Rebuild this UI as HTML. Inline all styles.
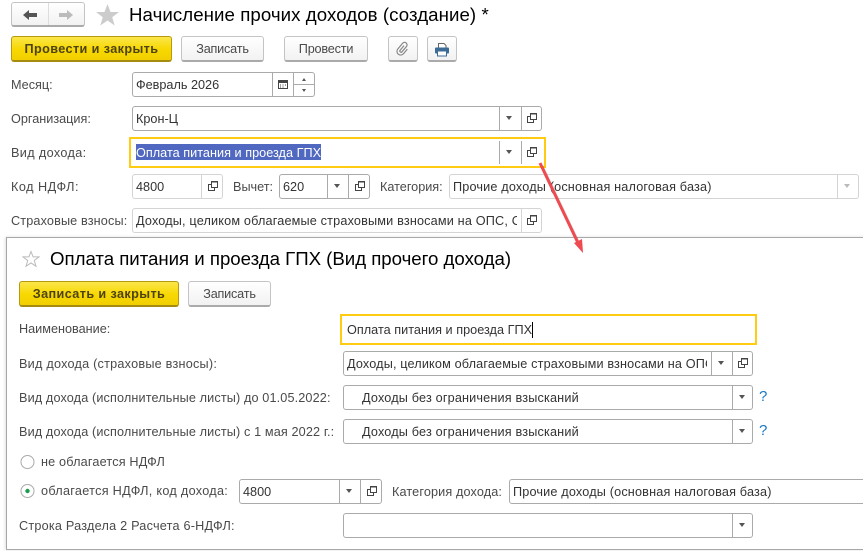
<!DOCTYPE html>
<html><head><meta charset="utf-8">
<style>
html,body{margin:0;padding:0;background:#fff}
body{width:863px;height:551px;position:relative;overflow:hidden;font-family:"Liberation Sans",Arial,sans-serif;font-size:12.67px;color:#333}
.a{position:absolute;white-space:nowrap}
.l{position:absolute;white-space:nowrap;color:#4a4a4a;font-size:12.67px;line-height:16px;letter-spacing:.13px}
.t{position:absolute;white-space:nowrap;color:#000;font-size:18.67px;line-height:22px}
.b{position:absolute;box-sizing:border-box;height:26px;border:1px solid #c4c4c4;border-bottom:2px solid #aaa;border-radius:3px;background:linear-gradient(#fff,#f2f2f2);text-align:center;line-height:24px;color:#4a4a4a;font-size:12.67px;letter-spacing:-.2px}
.y{border:1px solid #b59a10;border-bottom:2px solid #a58c10;background:linear-gradient(#fbe64a,#f7d800 55%,#f2cf00);color:#4e4310;font-weight:bold;letter-spacing:.39px}
.f{position:absolute;box-sizing:border-box;height:25px;border:1px solid #aaa;border-radius:3px;background:#fff;overflow:hidden;line-height:25px;padding-left:3px;color:#333;font-size:12.67px;letter-spacing:.17px;white-space:nowrap}
.n{letter-spacing:0}
.lt{border-color:#d4d4d4}
.s{position:absolute;top:0;bottom:0;width:1px;background:#aaa}
.lt .s{background:#d4d4d4}
.d{position:absolute;top:9px;width:0;height:0;border:3px solid transparent;border-top:4px solid #555;border-bottom:0}
.o{position:absolute;top:6px;width:10px;height:10px}
.focus{position:absolute;box-sizing:border-box;border:2px solid #fc1;background:#fff}
.q{position:absolute;color:#1a78c4;font-size:15px;line-height:16px}
</style></head><body>

<svg width="0" height="0" style="position:absolute"><defs>
<symbol id="op" viewBox="0 0 10 10"><path d="M3 3.500H.5v6h6V7" fill="none" stroke="#444"/><rect x="3.500" y=".5" width="6" height="6" fill="none" stroke="#444"/><path d="M3.500 1h6" stroke="#444"/></symbol>
</defs></svg>

<!-- nav -->
<div class="b" style="left:11px;top:2px;width:74px;height:25px"></div>
<div class="a" style="left:48px;top:3px;width:1px;height:22px;background:#ddd"></div>
<svg class="a" style="left:22px;top:8px" width="16" height="14"><path d="M1 7l6-5v3h8v4H7v3z" fill="#555"/></svg>
<svg class="a" style="left:58px;top:8px" width="16" height="14"><path d="M15 7L9 2v3H1v4h8v3z" fill="#bbb"/></svg>
<svg class="a" style="left:95px;top:3px" width="25" height="23"><path d="M12.500 1l3 8h8.500l-6.800 5.200 2.500 8.300-7.200-5-7.200 5 2.500-8.300L1 9h8.500z" fill="#ccc"/></svg>
<div class="t" style="left:129px;top:4px;letter-spacing:.07px">Начисление прочих доходов (создание) *</div>

<!-- toolbar -->
<div class="b y" style="left:11px;top:36px;width:161px">Провести и закрыть</div>
<div class="b" style="left:181px;top:36px;width:83px">Записать</div>
<div class="b" style="left:284px;top:36px;width:84px">Провести</div>
<div class="b" style="left:388px;top:36px;width:30px"></div>
<svg class="a" style="left:395px;top:41px" width="15" height="16" viewBox="0 0 15 16"><g transform="rotate(40 7.500 8)"><path d="M6.500 4.500v6a1.200 1.200 0 0 0 2.400 0V3.500a2.500 2.500 0 0 0-5 0v7.500a3.700 3.700 0 0 0 7.400 0V5" fill="none" stroke="#888" stroke-width="1.200"/></g></svg>
<div class="b" style="left:427px;top:36px;width:30px"></div>
<svg class="a" style="left:434px;top:42px" width="16" height="15" viewBox="0 0 16 15"><path d="M4.500 1.500h5.500l2 2V6h-7.500z" fill="#fff" stroke="#666"/><rect x="1" y="5.500" width="14" height="6" rx="1" fill="#3c6c96"/><rect x="3.500" y="9" width="9" height="5" fill="#fff" stroke="#3c6c96"/></svg>

<!-- main form -->
<div class="l" style="left:11px;top:77px;letter-spacing:0">Месяц:</div>
<div class="f n" style="left:132px;top:72px;width:183px">Февраль 2026
<div class="s" style="left:139px"></div><div class="s" style="left:160px"></div>
<svg class="a" style="left:145px;top:5px" width="10" height="11"><rect x=".5" y="2.500" width="9" height="8" fill="none" stroke="#444"/><rect x="0" y="2" width="10" height="3" fill="#444"/><path d="M2 7h1M4.500 7h1M7 7h1M2 9h1M4.500 9h1" stroke="#444"/></svg>
<div class="a" style="left:161px;top:11px;width:21px;height:1px;background:#aaa"></div>
<div class="a" style="left:169px;top:5px;width:0;height:0;border:2.500px solid transparent;border-bottom:3px solid #555;border-top:0"></div>
<div class="a" style="left:169px;top:16px;width:0;height:0;border:2.500px solid transparent;border-top:3px solid #555;border-bottom:0"></div>
</div>

<div class="l" style="left:11px;top:111px;letter-spacing:0">Организация:</div>
<div class="f n" style="left:132px;top:106px;width:410px">Крон-Ц
<div class="s" style="left:366px"></div><div class="d" style="left:373px"></div><div class="s" style="left:388px"></div>
<svg class="o" style="left:394px"><use href="#op"/></svg></div>

<div class="l" style="left:11px;top:145px;letter-spacing:.36px">Вид дохода:</div>
<div class="focus" style="left:129px;top:137px;width:417px;height:31px"></div>
<div class="a" style="left:136px;top:144px;width:185px;height:16px;background:#5068bf"></div>
<div class="a" style="left:136px;top:145px;line-height:16px;color:#fff;letter-spacing:.03px">Оплата питания и проезда ГПХ</div>
<div class="a" style="left:499px;top:141px;width:1px;height:23px;background:#aaa"></div>
<div class="a" style="left:521px;top:141px;width:1px;height:23px;background:#aaa"></div>
<div class="d" style="left:506px;top:150px"></div>
<svg class="a" style="left:527px;top:147px" width="10" height="10"><use href="#op"/></svg>

<div class="l" style="left:11px;top:179px;letter-spacing:.5px">Код НДФЛ:</div>
<div class="f lt n" style="left:132px;top:174px;width:91px">4800
<div class="s" style="left:68px"></div><svg class="o" style="left:75px"><use href="#op"/></svg></div>
<div class="l" style="left:233px;top:179px;letter-spacing:0">Вычет:</div>
<div class="f n" style="left:279px;top:174px;width:91px">620
<div class="s" style="left:47px"></div><div class="d" style="left:54px"></div><div class="s" style="left:68px"></div>
<svg class="o" style="left:75px"><use href="#op"/></svg></div>
<div class="l" style="left:380px;top:179px;letter-spacing:0">Категория:</div>
<div class="f lt" style="left:449px;top:174px;width:410px">Прочие доходы (основная налоговая база)
<div class="s" style="left:387px"></div><div class="d" style="left:394px;border-top-color:#bbb"></div></div>

<div class="l" style="left:11px;top:213px;letter-spacing:.14px">Страховые взносы:</div>
<div class="f lt" style="left:132px;top:208px;width:410px"><div style="width:381px;overflow:hidden">Доходы, целиком облагаемые страховыми взносами на ОПС, ОМС и ВНиМ</div>
<div class="s" style="left:388px"></div><svg class="o" style="left:394px"><use href="#op"/></svg></div>

<!-- panel -->
<div class="a" style="left:6px;top:237px;width:870px;height:313px;box-sizing:border-box;border:1px solid #a8a8a8;background:#fff;box-shadow:-1px 0 3px rgba(0,0,0,.12)"></div>
<svg class="a" style="left:22px;top:250px" width="18" height="18" viewBox="0 0 18 18"><path d="M9 1.500l2.100 5.400h5.900l-4.700 3.600 1.700 5.800L9 12.900l-5 3.400 1.700-5.800L1 6.900h5.900z" fill="#fff" stroke="#bbb"/></svg>
<div class="t" style="left:50px;top:248px;letter-spacing:-.02px">Оплата питания и проезда ГПХ (Вид прочего дохода)</div>

<div class="b y" style="left:19px;top:281px;width:160px">Записать и закрыть</div>
<div class="b" style="left:188px;top:281px;width:83px">Записать</div>

<div class="l" style="left:19px;top:321px;letter-spacing:0">Наименование:</div>
<div class="focus" style="left:340px;top:314px;width:417px;height:31px"></div>
<div class="a" style="left:347px;top:322px;line-height:16px;letter-spacing:.03px">Оплата питания и проезда ГПХ</div>
<div class="a" style="left:532px;top:322px;width:1px;height:16px;background:#000"></div>

<div class="l" style="left:19px;top:356px;letter-spacing:.23px">Вид дохода (страховые взносы):</div>
<div class="f" style="left:343px;top:351px;width:410px;letter-spacing:.15px"><div style="width:360px;overflow:hidden">Доходы, целиком облагаемые страховыми взносами на ОПС, ОМС</div>
<div class="s" style="left:367px"></div><div class="d" style="left:374px"></div><div class="s" style="left:388px"></div>
<svg class="o" style="left:394px"><use href="#op"/></svg></div>

<div class="l" style="left:19px;top:390px">Вид дохода (исполнительные листы) до 01.05.2022:</div>
<div class="f" style="left:343px;top:385px;width:410px;padding-left:18px">Доходы без ограничения взысканий
<div class="s" style="left:388px"></div><div class="d" style="left:395px"></div></div>
<div class="q" style="left:759px;top:389px">?</div>

<div class="l" style="left:19px;top:424px">Вид дохода (исполнительные листы) с 1 мая 2022 г.:</div>
<div class="f" style="left:343px;top:419px;width:410px;padding-left:18px">Доходы без ограничения взысканий
<div class="s" style="left:388px"></div><div class="d" style="left:395px"></div></div>
<div class="q" style="left:759px;top:423px">?</div>

<svg class="a" style="left:20px;top:453px" width="16" height="46"><circle cx="7.500" cy="9" r="6.500" fill="#fff" stroke="#aaa"/><circle cx="7.500" cy="38" r="6.500" fill="#fff" stroke="#aaa"/><circle cx="7.500" cy="38" r="2.200" fill="#1a9c50"/></svg>
<div class="l" style="left:41px;top:454px;letter-spacing:.17px">не облагается НДФЛ</div>
<div class="l" style="left:41px;top:483px;letter-spacing:.29px">облагается НДФЛ, код дохода:</div>
<div class="f n" style="left:239px;top:479px;width:143px">4800
<div class="s" style="left:99px"></div><div class="d" style="left:106px"></div><div class="s" style="left:120px"></div>
<svg class="o" style="left:127px"><use href="#op"/></svg></div>
<div class="l" style="left:392px;top:484px">Категория дохода:</div>
<div class="f" style="left:509px;top:479px;width:380px">Прочие доходы (основная налоговая база)</div>

<div class="l" style="left:19px;top:518px;letter-spacing:.22px">Строка Раздела 2 Расчета 6-НДФЛ:</div>
<div class="f" style="left:343px;top:513px;width:410px">
<div class="s" style="left:388px"></div><div class="d" style="left:395px"></div></div>

<!-- arrow -->
<svg class="a" style="left:530px;top:155px" width="65" height="110"><path d="M11 9l39 82" stroke="rgba(0,0,0,.15)" stroke-width="3" transform="translate(1 2)"/><path d="M10 8l39 82" stroke="#ee4a50" stroke-width="3"/><path d="M53 98l-9-10 8-4z" fill="#ee4a50"/></svg>
</body></html>
